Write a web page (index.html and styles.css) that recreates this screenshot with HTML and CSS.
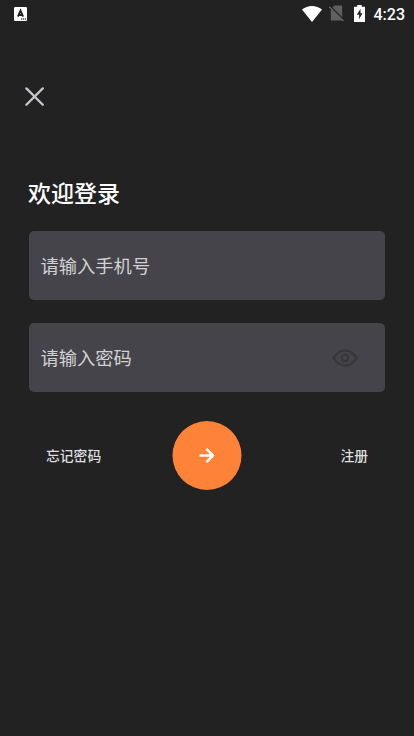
FILE: index.html
```html
<!DOCTYPE html>
<html lang="zh-CN">
<head>
<meta charset="utf-8">
<meta name="viewport" content="width=device-width, initial-scale=1">
<title>欢迎登录</title>
<link rel="stylesheet" href="styles.css">
</head>
<body>
<header class="status">
  <svg class="status-app" width="13" height="14" viewBox="0 0 13 14"><rect width="13" height="14" rx="1.2" fill="#fff"/><path d="M3.9 9.6 6.5 3.6 9.1 9.6M4.6 8h3.8" fill="none" stroke="#222" stroke-width="1.8"/><path d="M7 12h1.3M9 12h1.3M11 12h1" stroke="#444" stroke-width="1.3"/></svg>
  <div class="status-right">
    <svg class="wifi" width="20" height="16" viewBox="0 0 20 16"><path d="M0 3.5Q4.5 0 10 0T20 3.5L10 16Z" fill="#fff"/></svg>
    <svg class="sim" width="16" height="17" viewBox="0 0 16 17"><path d="M5.5.5H12Q13.2.5 13.2 1.7V15.5H1.8V4Z" fill="#606060"/><path d="M.8 1.3 15 15.5" stroke="#222223" stroke-width="2.2"/><path d="M.3 1.8 14.4 16" stroke="#686868" stroke-width="1.2"/></svg>
    <svg class="battery" width="11" height="17" viewBox="0 0 11 17"><path d="M3.3 0h4.4v1.7H10.4q.6 0 .6.6V16.4q0 .6-.6.6H.6Q0 17 0 16.4V2.3q0-.6.6-.6h2.7Z" fill="#fff"/><path d="M6.5 3.8 2.8 9.7h2.3v4.5L8.5 8.3H6.5Z" fill="#222223"/></svg>
    <span class="clock">4:23</span>
  </div>
</header>
<main class="login">
  <button class="close" aria-label="关闭"><svg width="20" height="20" viewBox="0 0 20 20"><path d="m1.4 1.4 16.4 16.4m0-16.4L1.4 17.8" stroke="#c5c6cb" stroke-width="2.3" stroke-linecap="round"/></svg></button>
  <h1 class="title">欢迎登录</h1>
  <div class="field"><span>请输入手机号</span></div>
  <div class="field"><span>请输入密码</span>
    <svg class="eye" width="26" height="18" viewBox="0 0 26 18" fill="none" stroke="#38383a" stroke-width="2.3"><path d="M1.4 9Q6.5 1.4 13 1.4T24.6 9Q19.5 16.6 13 16.6T1.4 9Z" stroke-linejoin="round"/><circle cx="13" cy="9" r="3.3"/></svg>
  </div>
  <div class="actions">
    <a class="link">忘记密码</a>
    <button class="submit" aria-label="登录"><svg width="70" height="70" viewBox="0 0 70 70"><circle cx="35" cy="34.5" r="34.5" fill="#ff8239"/><path d="M27.6 34.5h13M34.4 27.9 41 34.5l-6.6 6.6" fill="none" stroke="#fff" stroke-width="2.5" stroke-linejoin="round"/></svg></button>
    <a class="link link-end">注册</a>
  </div>
</main>
</body>
</html>
```
FILE: styles.css
```css
* { box-sizing: border-box; }
body {
  margin: 0;
  min-height: 736px;
  background: #222223;
  color: #fff;
  font-family: "Noto Sans CJK SC", sans-serif;
}
svg { display: block; flex: none; }
button { border: 0; padding: 0; background: none; }
.status {
  height: 28px;
  padding: 0 9px 0 14px;
  display: flex;
  align-items: center;
  justify-content: space-between;
}
.status-right { display: flex; align-items: center; }
.sim { margin-left: 7px; }
.battery { margin: 0 0 1px 9px; }
.clock {
  margin-left: 9px;
  font: 500 16px/28px Roboto, sans-serif;
  padding-top: 1px;
}
.wifi, .sim { margin-bottom: 1px; }
.login { padding: 59px 29px 0; }
.close { display: block; margin-left: -4px; }
.title {
  margin: 68px 0 22px -1px;
  font-size: 23px;
  line-height: 34px;
  font-weight: 500;
}
.field {
  height: 69px;
  margin-bottom: 23px;
  padding: 0 27px 0 11.5px;
  display: flex;
  align-items: center;
  justify-content: space-between;
  border-radius: 5px;
  background: #45444a;
  color: #d2d2d2;
  font-size: 18.3px;
  line-height: 28px;
}
.field span { padding-bottom: 2px; }
.actions {
  margin-top: 29px;
  padding: 0 17px;
  display: grid;
  grid-template-columns: 1fr 70px 1fr;
  align-items: center;
}
.link {
  padding-bottom: 3px;
  color: #dedede;
  font-size: 13.8px;
  line-height: 20px;
  font-weight: 500;
}
.link-end { text-align: right; }
.submit {
  width: 70px;
  height: 70px;
}
```
